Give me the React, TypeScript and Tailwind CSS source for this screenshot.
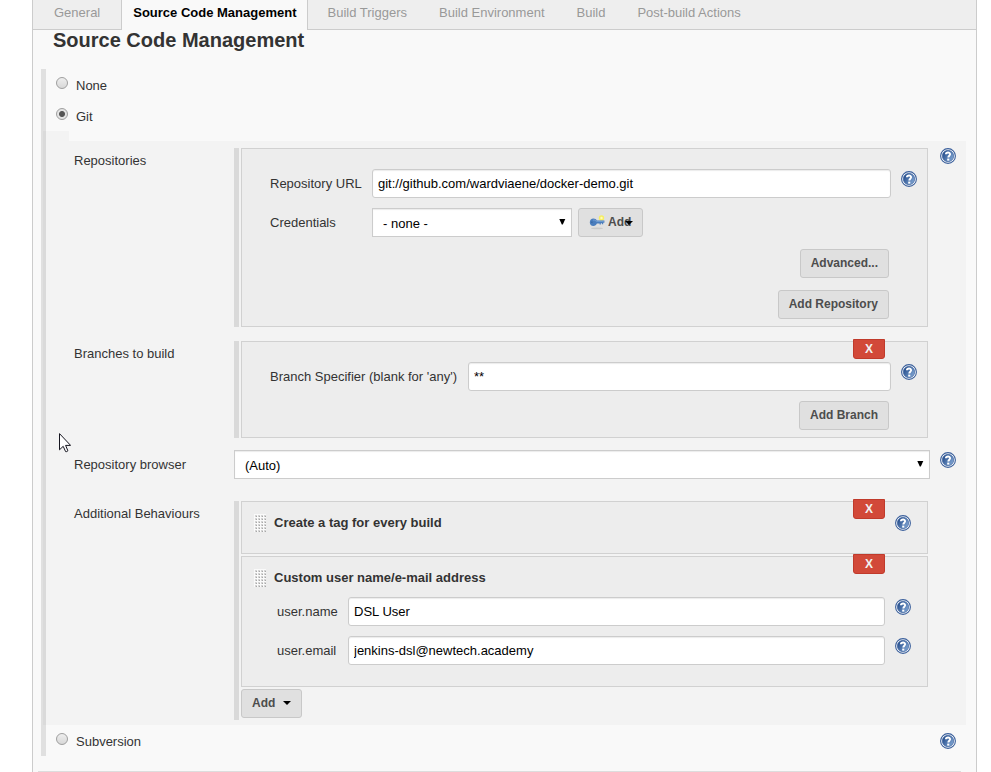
import type { ReactNode } from "react";

const inputClass =
  "h-[29px] min-w-0 flex-1 rounded-[3px] border border-[#ccc] bg-white px-[5px] text-[13px] leading-5 text-black shadow-[inset_0_1px_1px_rgba(0,0,0,0.08)] outline-none";

function HelpButton({ topic, className = "" }: { topic: string; className?: string }) {
  return (
    <button type="button" aria-label={`Help for ${topic}`} className={`size-4 shrink-0 ${className}`}>
      <svg viewBox="0 0 16 16" className="block size-4">
        <defs>
          <linearGradient id="help-fill" x1="0" y1="0" x2="1" y2="0.6">
            <stop offset="0" stopColor="#1a4282" />
            <stop offset="1" stopColor="#7ba0cf" />
          </linearGradient>
        </defs>
        <circle cx="8" cy="8" r="7.4" fill="#fff" stroke="#3a5f9b" strokeWidth="1.1" />
        <circle cx="8" cy="8" r="5.7" fill="url(#help-fill)" stroke="#2d5596" strokeWidth="0.6" />
        <path
          d="M5.9 6.3C6 3.9 10.2 4 10.1 6.2C10 7.7 8.3 7.8 8.3 9.6"
          fill="none"
          stroke="#fff"
          strokeWidth="1.9"
        />
        <rect x="7.2" y="10.6" width="2.1" height="2" fill="#fff" />
      </svg>
    </button>
  );
}

function GreyButton({ children, className = "" }: { children: ReactNode; className?: string }) {
  return (
    <button
      type="button"
      className={`flex h-[29px] items-center rounded-[3px] border border-[#c8c8c8] bg-[#e0e0e0] px-[10px] pb-[2px] text-[12px] leading-5 font-bold text-[#4d4d4d] ${className}`}
    >
      {children}
    </button>
  );
}

function DeleteButton() {
  return (
    <button
      type="button"
      aria-label="Delete"
      className="absolute -top-[3px] right-[42px] flex h-5 w-8 items-center justify-center rounded-b-[3px] border border-[#c03a2b] bg-[#d24939] text-[12px] leading-4 font-bold text-[#f1f1f1]"
    >
      X
    </button>
  );
}

function Dropdown({ id, value, className }: { id: string; value: string; className: string }) {
  return (
    <div className={`relative ${className}`}>
      <select
        id={id}
        className="block h-[29px] w-full appearance-none border border-[#ccc] bg-white px-[10px] pt-[2px] text-[13px] leading-5 text-black shadow-[inset_0_1px_1px_rgba(0,0,0,0.08)] outline-none"
      >
        <option>{value}</option>
      </select>
      <svg viewBox="0 0 7 6" className="pointer-events-none absolute top-[11px] right-[6px] h-[6px] w-[7px]">
        <path d="M.3 0H6.3L3.8 5.6H2.8Z" fill="#000" />
      </svg>
    </div>
  );
}

function Panel({ children, className = "" }: { children: ReactNode; className?: string }) {
  return <div className={`relative border border-[#d1d1d1] bg-[#ededed] ${className}`}>{children}</div>;
}

function Stack({ children }: { children: ReactNode }) {
  return (
    <div className="flex min-w-0 flex-1 flex-col gap-[2px] border-l-[5px] border-[#d9d9d9] px-[2px]">{children}</div>
  );
}

function Row({ title, htmlFor, help, className = "", children }: {
  title: string;
  htmlFor?: string;
  help?: ReactNode;
  className?: string;
  children: ReactNode;
}) {
  const titleClass = htmlFor ? "w-40 shrink-0 pt-[5px] leading-5" : "w-40 shrink-0 pt-[3px] leading-5";
  return (
    <div className={`flex items-start ${className}`}>
      {htmlFor ? (
        <label htmlFor={htmlFor} className={titleClass}>{title}</label>
      ) : (
        <h2 className={titleClass}>{title}</h2>
      )}
      {children}
      <div className="ml-[10px] w-4 shrink-0">{help}</div>
    </div>
  );
}

function Field({ id, label, value, labelWidth, help }: {
  id: string;
  label: string;
  value: string;
  labelWidth: string;
  help: string;
}) {
  return (
    <div className="flex items-start">
      <label htmlFor={id} className={`shrink-0 pt-[5px] leading-5 ${labelWidth}`}>{label}</label>
      <input id={id} type="text" defaultValue={value} className={inputClass} />
      <HelpButton topic={help} className="mt-[2px] ml-[10px]" />
    </div>
  );
}

function RadioRow({ id, label, checked = false, children }: {
  id: string;
  label: string;
  checked?: boolean;
  children?: ReactNode;
}) {
  return (
    <div className="flex h-[31px] items-start pt-2 pl-[10px]">
      <input
        id={id}
        type="radio"
        name="scm"
        defaultChecked={checked}
        className="size-3 shrink-0 appearance-none rounded-full border border-[#a0a0a0] bg-[#e2e2e2] bg-linear-to-b from-[#eee] to-[#d8d8d8] checked:bg-[radial-gradient(circle,#555_0,#555_2.5px,#e4e4e4_3.5px)]"
      />
      <label htmlFor={id} className="ml-2 leading-[18px]">{label}</label>
      {children}
    </div>
  );
}

function DragHandle() {
  return (
    <svg viewBox="0 0 12 18" className="mr-2 block h-[18px] w-3 shrink-0">
      <defs>
        <pattern id="grip" width="3" height="3" patternUnits="userSpaceOnUse">
          <rect width="3" height="3" fill="#fafafa" />
          <rect x="1" y="1" width="2" height="2" fill="#d4d4d4" />
          <rect x="2" y="2" width="1" height="1" fill="#a8a8a8" />
        </pattern>
      </defs>
      <rect width="12" height="18" fill="url(#grip)" />
    </svg>
  );
}

function BehaviourHeader({ title, help = false }: { title: string; help?: boolean }) {
  return (
    <div className="flex items-start pl-3">
      <DragHandle />
      <h3 className="flex-1 leading-[18px] font-bold">{title}</h3>
      {help && <HelpButton topic={title} className="mt-px" />}
    </div>
  );
}

function Caret() {
  return (
    <svg viewBox="0 0 8 4" className="h-1 w-2">
      <path d="M0 0H8L4 4Z" fill="#000" />
    </svg>
  );
}

function KeyIcon() {
  return (
    <svg viewBox="0 0 16 16" className="size-4 shrink-0">
      <ellipse cx="8" cy="14.4" rx="6" ry="0.8" fill="#c9c9c9" />
      <circle cx="12.5" cy="4" r="2.7" fill="#f6ee63" />
      <circle cx="12.5" cy="4" r="1.2" fill="#fffbb8" />
      <path d="M4.5 4.6C6.1 4.6 7.2 5.4 7.7 6.4H15.4V8.8H14.2V10.2H13V9.2H11.8V10.4H10.6V9.6H7.9C7.3 11.3 6.1 12 4.4 12C2.1 12 .8 10.4 .8 8.3C.8 6.1 2.3 4.6 4.5 4.6Z" fill="#4a7dbd" />
      <path d="M4 6Q6 5.6 7.4 7.4H14.8" fill="none" stroke="#7aa5d8" strokeWidth="0.8" />
      <circle cx="2.9" cy="8.2" r="0.6" fill="#2c5690" />
    </svg>
  );
}

const laterTabs = ["Build Triggers", "Build Environment", "Build", "Post-build Actions"];

export default function App() {
  return (
    <div className="relative min-h-screen bg-white pr-[14px] pl-8 font-['Liberation_Sans',Arial,sans-serif] text-[13px] text-[#333]">
      <main className="min-h-screen border-x border-[#ccc] bg-[#f9f9f9]">
        <nav className="flex h-[30px] text-[#999]">
          <a href="#general" className="border-r border-b border-[#ccc] bg-[#eee] px-[21px] pt-[3px] leading-5">
            General
          </a>
          <a href="#scm" aria-current="page" className="border-r border-[#ccc] pt-[3px] pr-[10px] pl-[11px] leading-5 font-bold text-black">
            Source Code Management
          </a>
          <div className="flex flex-1 gap-8 border-b border-[#ccc] bg-[#eee] pt-[3px] pl-5 leading-5">
            {laterTabs.map((tab) => (
              <a key={tab} href="#tab">{tab}</a>
            ))}
          </div>
        </nav>

        <h1 className="ml-5 text-[20px] leading-5 font-bold">Source Code Management</h1>

        <form className="mt-[19px] ml-2 border-l-[5px] border-[#e0e0e0]">
          <RadioRow id="scm-none" label="None" />
          <RadioRow id="scm-git" label="Git" checked />

          <div className="mr-[10px] -ml-[3px]">
            <div className="h-[10px] w-[26px] bg-black/[0.025]" />
            <div className="bg-black/[0.025] pt-[7px] pr-[10px] pb-[5px] pl-[31px]">
              <Row title="Repositories" help={<HelpButton topic="Repositories" />}>
                <Stack>
                  <Panel className="flex flex-col pt-5 pr-[10px] pb-[7px] pl-7">
                    <Field
                      id="repo-url"
                      label="Repository URL"
                      value="git://github.com/wardviaene/docker-demo.git"
                      labelWidth="w-[102px]"
                      help="Repository URL"
                    />
                    <div className="mt-[10px] flex items-start">
                      <label htmlFor="credentials" className="w-[102px] shrink-0 pt-[5px] leading-5">Credentials</label>
                      <Dropdown id="credentials" value="- none -" className="w-[200px]" />
                      <GreyButton className="relative ml-[6px] w-[65px]">
                        <KeyIcon />
                        <span className="ml-[3px]">Add</span>
                        <span className="absolute top-[12px] right-[9px] flex">
                          <Caret />
                        </span>
                      </GreyButton>
                    </div>
                    <div className="mt-3 mr-7 flex flex-col items-end gap-3">
                      <GreyButton>Advanced...</GreyButton>
                      <GreyButton>Add Repository</GreyButton>
                    </div>
                  </Panel>
                </Stack>
              </Row>

              <Row title="Branches to build" className="mt-[14px]">
                <Stack>
                  <Panel className="pt-5 pr-[10px] pb-[7px] pl-7">
                    <DeleteButton />
                    <Field
                      id="branch"
                      label="Branch Specifier (blank for 'any')"
                      value="**"
                      labelWidth="w-[198px]"
                      help="Branch Specifier"
                    />
                    <div className="mt-[10px] mr-7 flex justify-end">
                      <GreyButton>Add Branch</GreyButton>
                    </div>
                  </Panel>
                </Stack>
              </Row>

              <Row
                title="Repository browser"
                htmlFor="browser"
                className="mt-3"
                help={<HelpButton topic="Repository browser" className="mt-[2px]" />}
              >
                <Dropdown id="browser" value="(Auto)" className="flex-1" />
              </Row>

              <Row title="Additional Behaviours" className="mt-[22px]">
                <Stack>
                  <Panel className="pt-3 pr-4 pb-[21px]">
                    <DeleteButton />
                    <BehaviourHeader title="Create a tag for every build" help />
                  </Panel>
                  <Panel className="pt-3 pr-4 pb-[21px]">
                    <DeleteButton />
                    <BehaviourHeader title="Custom user name/e-mail address" />
                    <div className="mt-[10px] flex flex-col gap-[10px] pl-[35px]">
                      <Field id="user-name" label="user.name" value="DSL User" labelWidth="w-[71px]" help="user.name" />
                      <Field id="user-email" label="user.email" value="jenkins-dsl@newtech.academy" labelWidth="w-[71px]" help="user.email" />
                    </div>
                  </Panel>
                  <div className="flex pb-[2px]">
                    <GreyButton className="gap-2">
                      Add
                      <Caret />
                    </GreyButton>
                  </div>
                </Stack>
              </Row>
            </div>
          </div>

          <RadioRow id="scm-svn" label="Subversion">
            <HelpButton topic="Subversion" className="mr-5 ml-auto" />
          </RadioRow>
        </form>

        <hr className="mt-[15px] mr-[15px] ml-[5px] border-[#ddd]" />
      </main>

      <svg viewBox="0 0 12 20" className="pointer-events-none absolute top-[433px] left-[59px] h-5 w-3">
        <path
          d="M.5.6V16.8L4.2 13.3L6.6 18.6Q7.8 19 8.9 17.8L6.6 12.4H11.6Z"
          fill="#fff"
          stroke="#15151f"
          strokeWidth="1"
        />
      </svg>
    </div>
  );
}
